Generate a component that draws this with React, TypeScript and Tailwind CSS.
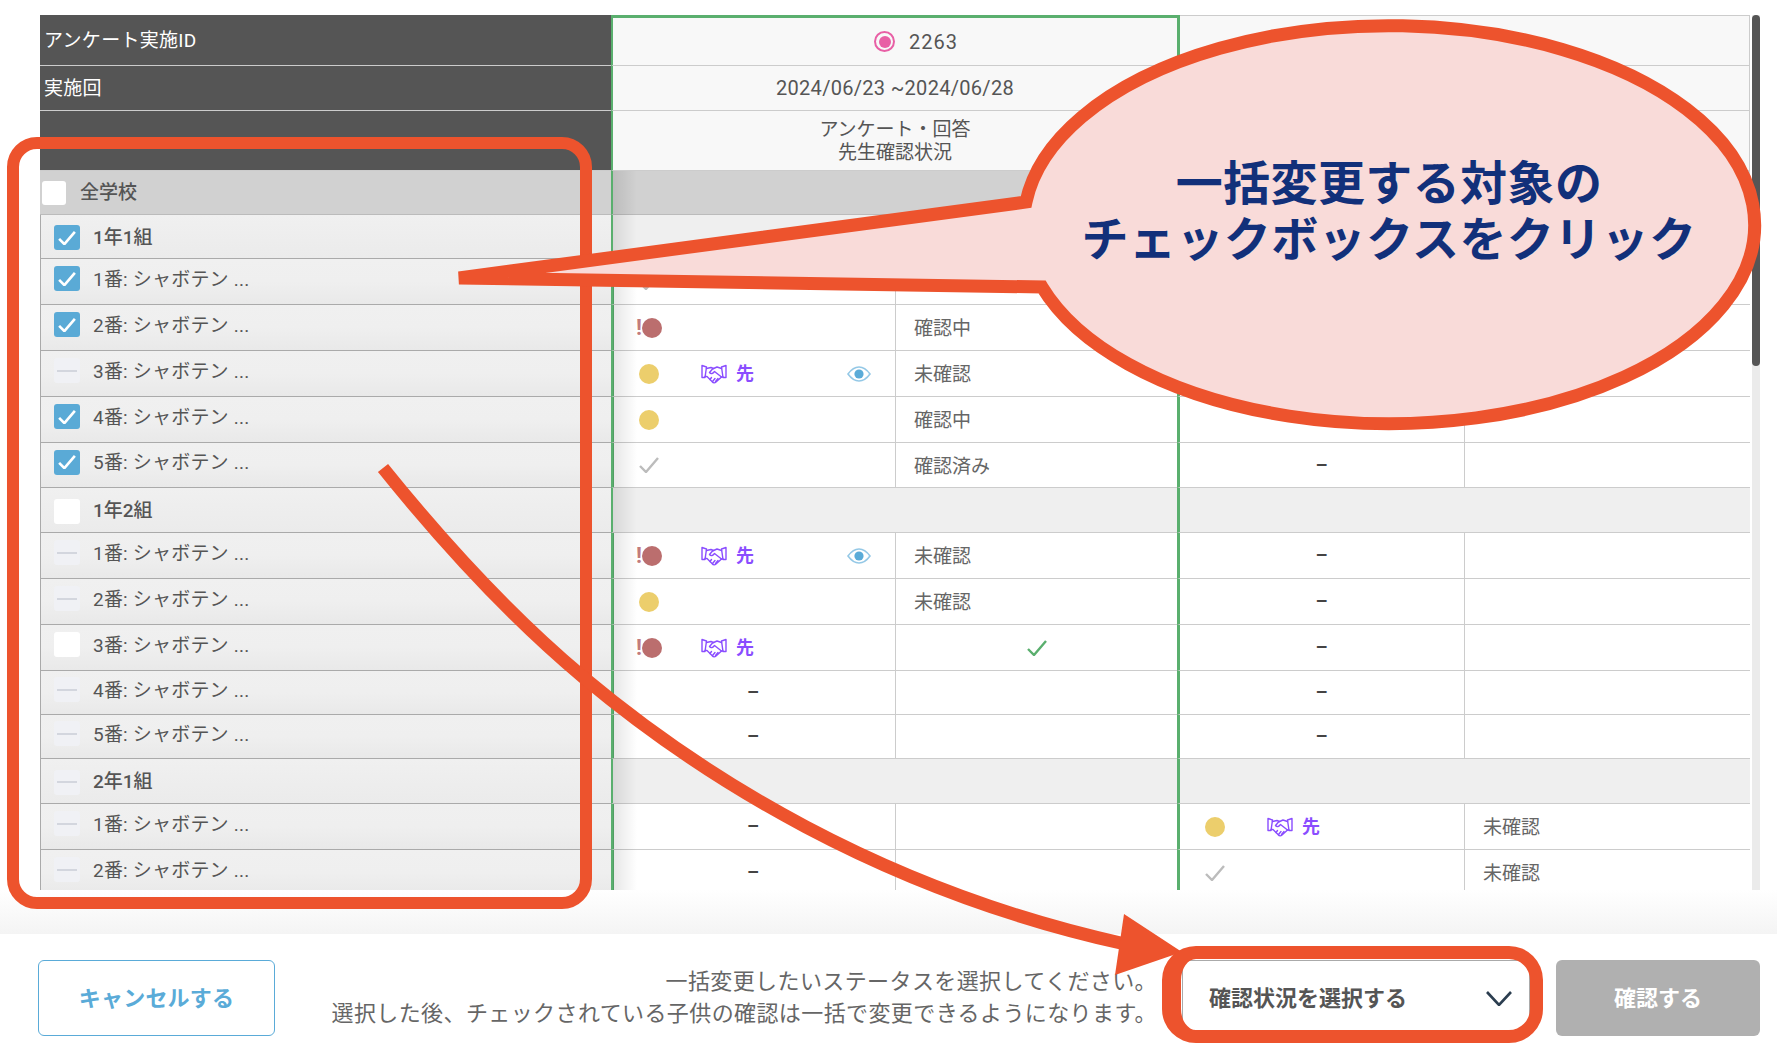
import React from 'react';

type Status = 'red' | 'yellow' | 'check';

type Answer = {
  status?: Status;
  partner?: boolean;
  eye?: boolean;
  text?: string;
  ok?: boolean;
  dash?: boolean;
};

const Check = ({ className, width = 2.4 }: { className: string; width?: number }) => (
  <svg viewBox="0 0 20 16" className={className} fill="none" stroke="currentColor" strokeWidth={width}>
    <path d="M1 9 L7 15 L19 1" />
  </svg>
);

const Eye = () => (
  <svg viewBox="0 0 24 16" className="w-[24px] h-[16px] text-[#5aabd8]" fill="none" stroke="currentColor">
    <path d="M1 8 C5 2.5 9 1 12 1 C15 1 19 2.5 23 8 C19 13.5 15 15 12 15 C9 15 5 13.5 1 8 Z" strokeWidth="1.6" opacity="0.65" />
    <circle cx="12" cy="8" r="4.6" fill="currentColor" stroke="none" />
  </svg>
);

const Hands = () => (
  <svg viewBox="0 0 26 20" className="w-[26px] h-[20px]" fill="none" stroke="currentColor" strokeWidth="1.4" strokeLinejoin="round" strokeLinecap="round">
    <path d="M1 1.5 L5.5 3 L4 13.5 L1 13.5 Z" />
    <path d="M25 1.5 L20.5 3 L22 13.5 L25 13.5 Z" />
    <path d="M5.5 4.5 L10 3.5 L12.5 4.5" />
    <path d="M20.5 4.5 L16 3 L11.5 5 L8.5 8.5 C10 10.5 12 9.5 13.5 7.5 L20.5 13" />
    <path d="M4 12.5 L6 12.5 L11 17.5 C12.5 19.5 14 19 15 18 L20.5 13 L22 13" />
    <path d="M9 15.5 L10.5 13.5 M11.5 17.5 L14 14.5 M14.5 17.5 L17 14.5" />
  </svg>
);

const StatusIcon = ({ status }: { status?: Status }) => {
  if (status === 'red') {
    return (
      <div className="flex items-center -ml-[3px]">
        <span className="w-[6px] text-[#c27b7b] text-[22px] font-bold leading-none">!</span>
        <span className="w-[20px] h-[20px] rounded-full bg-[#bb6e6e]" />
      </div>
    );
  }
  if (status === 'yellow') return <span className="block w-[20px] h-[20px] rounded-full bg-[#ecce6c]" />;
  if (status === 'check') return <Check className="w-[20px] h-[16px] text-[#bcbcbc]" />;
  return null;
};

const AnswerCells = ({ a, first }: { a: Answer; first: boolean }) => (
  <>
    <div
      className={`flex items-center border-b border-[#ccc] border-l-[3px] border-l-[#5aaf6e] ${
        first ? 'w-[284px] border-l-[2px]' : 'w-[287px]'
      } ${a.dash ? `justify-center ${first ? 'pr-[3px]' : 'pr-[1px]'}` : 'pl-[25px]'}`}
    >
      {a.dash ? (
        <span className="text-[19px] font-bold text-[#444]">–</span>
      ) : (
        <>
          <div className="w-[62px]">
            <StatusIcon status={a.status} />
          </div>
          <div className="w-[146px] flex items-center gap-[9px] text-[#8a4dff]">
            {a.partner && (
              <>
                <Hands />
                <span className="text-[18px] font-bold leading-none">先</span>
              </>
            )}
          </div>
          {a.eye && <Eye />}
        </>
      )}
    </div>
    <div
      className={`flex items-center border-b border-[#ccc] border-l border-l-[#ccc] text-[19px] text-[#666] ${
        first ? 'w-[282px]' : 'w-[286px]'
      } ${a.ok ? 'justify-center' : 'pl-[18px]'}`}
    >
      {a.ok ? <Check className="w-[20px] h-[16px] text-[#5aaf6e]" /> : <span className="mt-[4px]">{a.text}</span>}
    </div>
  </>
);

const Box = ({ state, className = 'w-[26px] h-[25px]' }: { state: string; className?: string }) => {
  if (state === 'on') {
    return (
      <span className={`flex items-center justify-center rounded-[3px] bg-[#5aaad6] text-white ${className}`}>
        <Check className="w-[18px] h-[14px]" width={3} />
      </span>
    );
  }
  if (state === 'off') return <span className={`block rounded-[3px] bg-white ${className}`} />;
  return (
    <span className={`flex items-center justify-center rounded-[3px] bg-[#f0f1f5] ${className}`}>
      <span className="block w-[20px] h-[2px] bg-[#d3d6de]" />
    </span>
  );
};

const Student = ({ h, box, label, a, b }: { h: string; box: string; label: string; a: Answer; b: Answer }) => (
  <div className={`flex ${h}`}>
    <div className="w-[571px] flex items-center gap-[13px] pl-[13px] border-l border-l-[#aaa] border-b border-b-[#aaa] bg-linear-to-b from-[#f0f0f0] via-[#efefef] to-[#e9e9e9] text-[19px] text-[#555] tracking-[0.2px]">
      <Box state={box} className="w-[26px] h-[25px] -translate-y-[3px]" />
      <span className="-mt-[3px]">{label}</span>
    </div>
    <AnswerCells a={a} first />
    <AnswerCells a={b} first={false} />
  </div>
);

const Group = ({ h, box, label }: { h: string; box: string; label: string }) => (
  <div className={`flex ${h}`}>
    <div className="w-[571px] flex items-center gap-[13px] pl-[13px] border-l border-l-[#aaa] border-b border-b-[#aaa] bg-linear-to-b from-[#f0f0f0] to-[#ebebeb] text-[19px] font-medium text-[#555]">
      <Box state={box} className="w-[26px] h-[25px] translate-y-[1px]" />
      <span className="mt-[3px]">{label}</span>
    </div>
    <div className="w-[566px] bg-[#efefef] border-b border-[#ccc] border-l-[2px] border-l-[#5aaf6e]" />
    <div className="w-[573px] bg-[#efefef] border-b border-[#ccc] border-l-[3px] border-l-[#5aaf6e]" />
  </div>
);

const HeadRow = ({ h, label, children, top }: { h: string; label?: string; children?: React.ReactNode; top?: boolean }) => (
  <div className={`flex ${h}`}>
    <div className="w-[571px] flex items-center pl-[4px] pt-[2px] bg-[#555] border-b border-[#ccc] text-white text-[19px] tracking-[0.3px]">{label}</div>
    <div
      className={`w-[569px] flex items-center justify-center bg-[#f8f8f8] border-b border-[#ccc] border-l-[2px] border-r-[3px] border-x-[#5aaf6e] text-[20px] text-[#555] tracking-[0.3px] ${
        top ? 'border-t-[3px] border-t-[#5aaf6e]' : ''
      }`}
    >
      {children}
    </div>
    <div className={`w-[570px] bg-[#f8f8f8] border-b border-[#ccc] border-r border-r-[#ccc] ${top ? 'border-t border-t-[#ccc]' : ''}`} />
  </div>
);

const none: Answer = { dash: true };

export default function App() {
  return (
    <div className="relative w-[1777px] h-[1044px] overflow-hidden bg-white font-['Roboto','Noto_Sans_CJK_JP',sans-serif]">
      <div className="h-[15px]" />
      <div className="flex h-[875px] pl-[40px]">
        <div className="relative w-[1711px] overflow-hidden">
          <HeadRow h="h-[51px]" label="アンケート実施ID" top>
            <span className="block w-[21px] h-[21px] ml-[42px] rounded-full border-2 border-[#e85fa5] p-[2.5px] mr-[14px]">
              <span className="block w-full h-full rounded-full bg-[#e85fa5]" />
            </span>
            <span className="tracking-[1px]">2263</span>
          </HeadRow>
          <HeadRow h="h-[45px]" label="実施回">2024/06/23 ~2024/06/28</HeadRow>
          <HeadRow h="h-[60px]">
            <div className="text-center leading-[23px] text-[19px] tracking-normal">
              アンケート・回答
              <br />
              先生確認状況
            </div>
          </HeadRow>
          <div className="flex h-[44px]">
            <div className="w-[571px] flex items-center gap-[14px] pl-[2px] bg-[#d1d1d1] border-b border-[#bbb] text-[19px] font-medium text-[#555]">
              <Box state="off" className="w-[24px] h-[24px]" />
              <span className="mt-[2px]">全学校</span>
            </div>
            <div className="w-[566px] bg-[#d1d1d1] border-b border-[#bbb] border-l-[2px] border-l-[#5aaf6e]" />
            <div className="w-[573px] bg-[#d1d1d1] border-b border-[#bbb] border-l-[3px] border-l-[#5aaf6e]" />
          </div>
          <Group h="h-[44px]" box="on" label="1年1組" />
          <Student h="h-[46px]" box="on" label="1番: シャボテン ..." a={{ status: 'check', text: '確認中' }} b={{}} />
          <Student h="h-[46px]" box="on" label="2番: シャボテン ..." a={{ status: 'red', text: '確認中' }} b={{}} />
          <Student h="h-[46px]" box="minus" label="3番: シャボテン ..." a={{ status: 'yellow', partner: true, eye: true, text: '未確認' }} b={{}} />
          <Student h="h-[46px]" box="on" label="4番: シャボテン ..." a={{ status: 'yellow', text: '確認中' }} b={none} />
          <Student h="h-[45px]" box="on" label="5番: シャボテン ..." a={{ status: 'check', text: '確認済み' }} b={none} />
          <Group h="h-[45px]" box="off" label="1年2組" />
          <Student h="h-[46px]" box="minus" label="1番: シャボテン ..." a={{ status: 'red', partner: true, eye: true, text: '未確認' }} b={none} />
          <Student h="h-[46px]" box="minus" label="2番: シャボテン ..." a={{ status: 'yellow', text: '未確認' }} b={none} />
          <Student h="h-[46px]" box="off" label="3番: シャボテン ..." a={{ status: 'red', partner: true, ok: true }} b={none} />
          <Student h="h-[44px]" box="minus" label="4番: シャボテン ..." a={none} b={none} />
          <Student h="h-[44px]" box="minus" label="5番: シャボテン ..." a={none} b={none} />
          <Group h="h-[45px]" box="minus" label="2年1組" />
          <Student h="h-[46px]" box="minus" label="1番: シャボテン ..." a={none} b={{ status: 'yellow', partner: true, text: '未確認' }} />
          <Student h="h-[46px]" box="minus" label="2番: シャボテン ..." a={none} b={{ status: 'check', text: '未確認' }} />
          {/* shadow of the sticky first column */}
          <div className="absolute left-[573px] top-[156px] bottom-0 w-[24px] bg-linear-to-r from-black/10 to-transparent" />
        </div>
        <div className="ml-[1px] w-[8px] bg-[#ebebeb]">
          <div className="h-[351px] rounded-[4px] bg-[#555]" />
        </div>
      </div>
      <div className="h-[44px] bg-linear-to-b from-white to-[#f4f4f4]" />
      <div className="flex items-start h-[110px] pt-[26px] pl-[38px]">
        <button className="w-[237px] h-[76px] rounded-[6px] border border-[#5aabd8] text-[22px] font-bold text-[#5aabd8] tracking-[0.2px]">キャンセルする</button>
        <div className="w-[882px] pt-[6px] text-right text-[22px] leading-[32px] text-[#666] tracking-[0.4px]">
          一括変更したいステータスを選択してください。
          <br />
          選択した後、チェックされている子供の確認は一括で変更できるようになります。
        </div>
        <div className="ml-[25px] w-[348px] h-[76px] flex items-center justify-between pl-[26px] pr-[17px] bg-white border border-[#aaa] text-[22px] font-bold text-[#555]">
          確認状況を選択する
          <svg viewBox="0 0 26 15" className="w-[26px] h-[15px]" fill="none" stroke="#2c3e50" strokeWidth="2.6">
            <path d="M1 1 L13 14 L25 1" />
          </svg>
        </div>
        <button className="ml-[26px] w-[204px] h-[76px] rounded-[6px] bg-[#b0b0b0] text-[22px] font-bold text-white">確認する</button>
      </div>

      {/* annotations on top of the screenshot */}
      <svg viewBox="0 0 1777 1044" className="absolute inset-0 w-[1777px] h-[1044px] pointer-events-none">
        <rect x="13" y="143" width="573" height="760" rx="24" fill="none" stroke="#ed532d" strokeWidth="12" />
        <path d="M383 468 C445 545 515 620 583 677 C700 775 880 890 1125 944" fill="none" stroke="#ed532d" strokeWidth="13" />
        <polygon points="1124,914 1182,952 1115,975" fill="#ed532d" />
        <path
          d="M1026 202 A365.5 199 0 1 1 1042 287 L459 278 Z"
          fill="#f9dbd9"
          stroke="#ed532d"
          strokeWidth="13"
          strokeLinejoin="miter"
          strokeMiterlimit="4"
        />
      </svg>
      <div className="absolute left-[1017px] top-[156px] w-[744px] text-center text-[47px] leading-[56px] font-bold text-[#12307a] tracking-[0.4px]">
        一括変更する対象の
        <br />
        チェックボックスをクリック
      </div>
      <div className="absolute left-[1162px] top-[946px] w-[381px] h-[97px] rounded-[34px] border-[13px] border-l-[19px] border-[#ed532d]" />
    </div>
  );
}
